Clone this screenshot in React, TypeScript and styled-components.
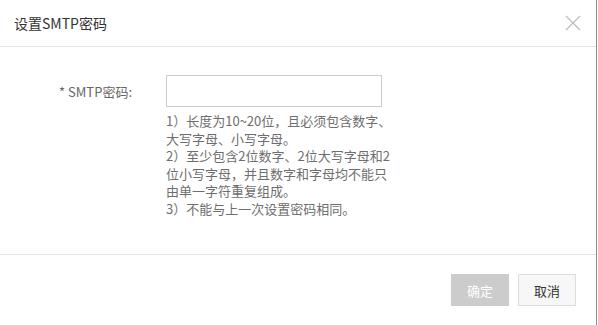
import React from 'react';
import styled, { createGlobalStyle } from 'styled-components';

const GlobalStyle = createGlobalStyle`
  html, body {
    margin: 0;
    padding: 0;
    background: #ffffff;
  }
  body {
    font-family: "Noto Sans CJK SC", "Liberation Sans", sans-serif;
  }
`;

const Dialog = styled.div`
  width: 597px;
  height: 325px;
  box-sizing: border-box;
  border-right: 1px solid #8c8c8c;
  background: #ffffff;
  display: flex;
  flex-direction: column;
`;

const Header = styled.header`
  height: 47px;
  box-sizing: border-box;
  border-bottom: 1px solid #e3e3e3;
  padding: 0 14px 0 14px;
  display: flex;
  align-items: center;
  justify-content: space-between;
  >h1{
    margin: 0;
    font-size: 14px;
    font-weight: normal;
    color: #333333;
  }
`;

const CloseButton = styled.button`
  background: none;
  border: none;
  padding: 0;
  width: 18px;
  height: 18px;
  display: flex;
  align-items: center;
  justify-content: center;
  cursor: pointer;
`;

const Body = styled.section`
  flex: 1;
  padding-top: 28px;
`;

const FormRow = styled.div`
  display: flex;
  align-items: flex-start;
`;

const Label = styled.label`
  width: 132px;
  margin-right: 34px;
  height: 32px;
  display: flex;
  align-items: center;
  justify-content: flex-end;
  font-size: 13px;
  color: #666666;
  white-space: nowrap;
`;

const Field = styled.div`
  display: flex;
  flex-direction: column;
`;

const Input = styled.input`
  width: 216px;
  height: 32px;
  box-sizing: border-box;
  border: 1px solid #cccccc;
  outline: none;
  padding: 0 8px;
  font-size: 13px;
`;

const Hint = styled.p`
  margin: 5px 0 0;
  font-size: 13px;
  line-height: 17.5px;
  color: #6e6e6e;
  white-space: nowrap;
`;

const Footer = styled.footer`
  height: 71px;
  box-sizing: border-box;
  border-top: 1px solid #e3e3e3;
  padding: 0 20px 0 0;
  display: flex;
  align-items: center;
  justify-content: flex-end;
  gap: 9px;
`;

const Button = styled.button<{ $primary?: boolean }>`
  width: 58px;
  height: 32px;
  box-sizing: border-box;
  font-family: inherit;
  font-size: 13px;
  cursor: pointer;
  border: 1px solid ${p => (p.$primary ? '#cccccc' : '#dddddd')};
  background: ${p => (p.$primary ? '#cccccc' : '#f7f7f7')};
  color: ${p => (p.$primary ? '#ffffff' : '#333333')};
`;

function App() {
  return (
    <>
      <GlobalStyle />
      <Dialog>
        <Header>
          <h1>设置SMTP密码</h1>
          <CloseButton aria-label="关闭">
            <svg width="16" height="16" viewBox="0 0 16 16">
              <path d="M1 1L15 15M15 1L1 15" stroke="#bdbdbd" strokeWidth="1.3" fill="none" />
            </svg>
          </CloseButton>
        </Header>
        <Body>
          <FormRow>
            <Label>* SMTP密码:</Label>
            <Field>
              <Input type="password" />
              <Hint>
                1）长度为10~20位，且必须包含数字、<br />
                大写字母、小写字母。<br />
                2）至少包含2位数字、2位大写字母和2<br />
                位小写字母，并且数字和字母均不能只<br />
                由单一字符重复组成。<br />
                3）不能与上一次设置密码相同。
              </Hint>
            </Field>
          </FormRow>
        </Body>
        <Footer>
          <Button $primary disabled>确定</Button>
          <Button>取消</Button>
        </Footer>
      </Dialog>
    </>
  );
}

export default App;
